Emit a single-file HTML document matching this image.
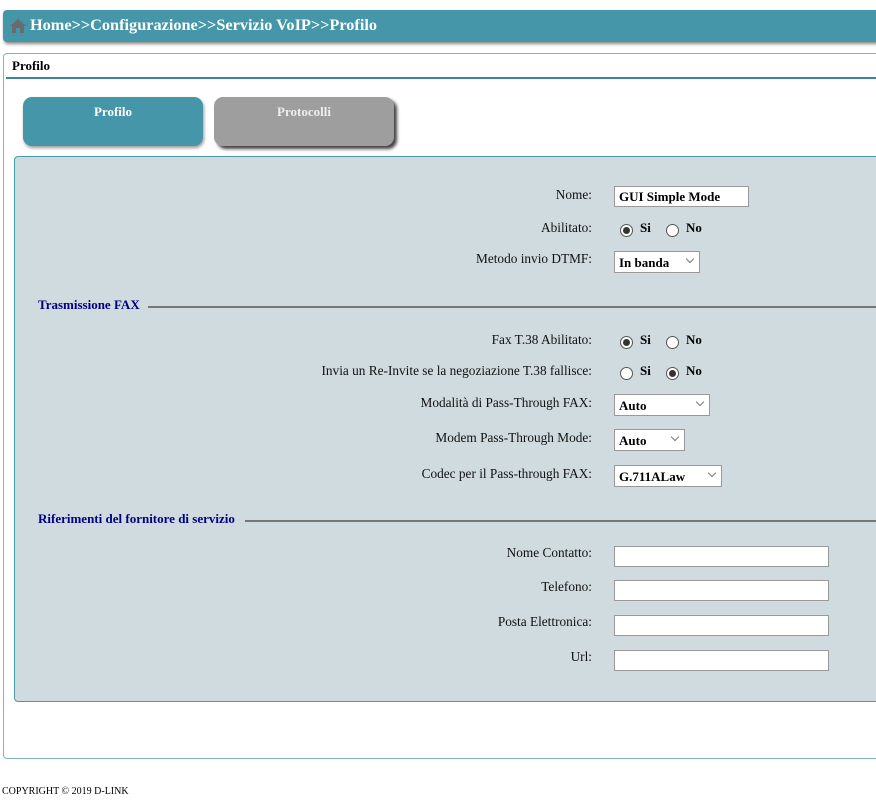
<!DOCTYPE html>
<html><head><meta charset="utf-8"><style>
*{box-sizing:border-box;margin:0;padding:0}
body{width:876px;height:800px;background:#fff;font-family:"Liberation Serif",serif;position:relative;overflow:hidden}
.a{position:absolute}
.hdr{left:3px;top:10px;width:880px;height:32px;background:#4596a8;border-radius:4px;box-shadow:1px 2px 3px #888}
.hdr span{position:absolute;left:27px;top:5px;color:#fff;font-weight:bold;font-size:16.3px}
.lbl{font-size:13.3px;color:#111;text-align:right;width:420px;left:172px}
.inp{background:#fff;border:1px solid #999;height:21px;font-size:13px;font-weight:bold;padding:2px 4px}
.sel{background:#fff;border:1px solid #999;height:22px;font-size:13px;font-weight:bold;padding:3px 4px}
.sel i{position:absolute;right:6px;top:4px;width:6px;height:6px;border-right:1px solid #777;border-bottom:1px solid #777;transform:rotate(45deg)}
.rad{width:13px;height:13px;border:1px solid #555;border-radius:50%;background:#fff}
.rad.on::after{content:"";position:absolute;left:2px;top:2px;width:7px;height:7px;border-radius:50%;background:#333}
.rt{font-size:13px;font-weight:bold}
.leg{font-size:13px;font-weight:bold;color:#000080}
.line{height:2px;background:#777}
</style></head><body>
<div class="a hdr"><svg class="a" style="left:6px;top:8px" width="18" height="16" viewBox="0 0 18 16"><path d="M9 1 L1 8 L3 8 L3 15 L7 15 L7 10 L11 10 L11 15 L15 15 L15 8 L17 8 Z" fill="#6b6b6b"/></svg><span>Home&gt;&gt;Configurazione&gt;&gt;Servizio VoIP&gt;&gt;Profilo</span></div>

<div class="a" style="left:3px;top:53px;width:880px;height:706px;border:1px solid #7fb4c2;border-radius:4px"></div>
<div class="a" style="left:12px;top:58px;font-size:13px;font-weight:bold">Profilo</div>
<div class="a" style="left:6px;top:77px;width:870px;height:2px;background:#3d8496"></div>

<div class="a" style="left:23px;top:97px;width:180px;height:49px;background:#4596a8;border-radius:9px;box-shadow:1px 2px 3px #999"></div>
<div class="a" style="left:23px;top:104px;width:180px;text-align:center;color:#fff;font-weight:bold;font-size:13px">Profilo</div>
<div class="a" style="left:214px;top:97px;width:180px;height:49px;background:#9e9e9e;border-radius:9px;box-shadow:3px 3px 3px #444"></div>
<div class="a" style="left:214px;top:104px;width:180px;text-align:center;color:#eee;font-weight:bold;font-size:13px">Protocolli</div>

<div class="a" style="left:14px;top:156px;width:880px;height:546px;background:#cfdbdf;border:1px solid #4a9aac;border-radius:4px"></div>

<div class="a lbl" style="top:187px">Nome:</div>
<div class="a inp" style="left:614px;top:186px;width:135px">GUI Simple Mode</div>
<div class="a lbl" style="top:220px">Abilitato:</div>
<div class="a rad on" style="left:620px;top:224px"></div><div class="a rt" style="left:640px;top:220px">Si</div>
<div class="a rad" style="left:666px;top:224px"></div><div class="a rt" style="left:686px;top:220px">No</div>
<div class="a lbl" style="top:251px">Metodo invio DTMF:</div>
<div class="a sel" style="left:614px;top:251px;width:86px">In banda<i></i></div>

<div class="a leg" style="left:38px;top:297px">Trasmissione FAX</div>
<div class="a line" style="left:148px;top:306px;width:730px"></div>

<div class="a lbl" style="top:332px">Fax T.38 Abilitato:</div>
<div class="a rad on" style="left:620px;top:336px"></div><div class="a rt" style="left:640px;top:332px">Si</div>
<div class="a rad" style="left:666px;top:336px"></div><div class="a rt" style="left:686px;top:332px">No</div>
<div class="a lbl" style="top:363px">Invia un Re-Invite se la negoziazione T.38 fallisce:</div>
<div class="a rad" style="left:620px;top:367px"></div><div class="a rt" style="left:640px;top:363px">Si</div>
<div class="a rad on" style="left:666px;top:367px"></div><div class="a rt" style="left:686px;top:363px">No</div>
<div class="a lbl" style="top:395px">Modalità di Pass-Through FAX:</div>
<div class="a sel" style="left:614px;top:394px;width:96px">Auto<i></i></div>
<div class="a lbl" style="top:430px">Modem Pass-Through Mode:</div>
<div class="a sel" style="left:614px;top:429px;width:71px">Auto<i></i></div>
<div class="a lbl" style="top:466px">Codec per il Pass-through FAX:</div>
<div class="a sel" style="left:614px;top:465px;width:108px">G.711ALaw<i></i></div>

<div class="a leg" style="left:38px;top:511px">Riferimenti del fornitore di servizio</div>
<div class="a line" style="left:245px;top:520px;width:640px"></div>

<div class="a lbl" style="top:545px">Nome Contatto:</div>
<div class="a inp" style="left:614px;top:546px;width:215px"></div>
<div class="a lbl" style="top:579px">Telefono:</div>
<div class="a inp" style="left:614px;top:580px;width:215px"></div>
<div class="a lbl" style="top:614px">Posta Elettronica:</div>
<div class="a inp" style="left:614px;top:615px;width:215px"></div>
<div class="a lbl" style="top:649px">Url:</div>
<div class="a inp" style="left:614px;top:650px;width:215px"></div>

<div class="a" style="left:2px;top:786px;font-size:10px">COPYRIGHT © 2019 D-LINK</div>
</body></html>
